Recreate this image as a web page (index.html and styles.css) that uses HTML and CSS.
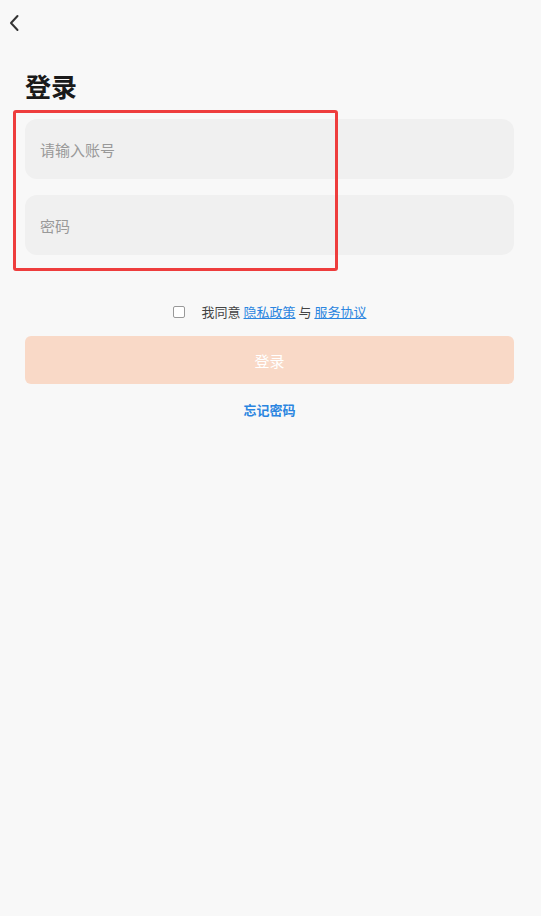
FILE: index.html
```html
<!DOCTYPE html>
<html lang="zh-CN">
<head>
    <meta charset="UTF-8">
    <meta name="viewport" content="width=device-width, initial-scale=1.0">
    <title>登录</title>
    <link rel="stylesheet" href="styles.css">
</head>
<body>
    <div class="topbar">
        <svg class="back" width="12" height="18" viewBox="0 0 12 18">
            <path d="M9.5 2 L3 9 L9.5 16" fill="none" stroke="#333" stroke-width="2" stroke-linecap="round" stroke-linejoin="round"/>
        </svg>
    </div>
    <div class="page">
        <h1 class="title">登录</h1>
        <div class="fields">
            <div class="field">请输入账号</div>
            <div class="field">密码</div>
            <!-- 标注框 -->
            <div class="mark"></div>
        </div>
        <div class="agree">
            <span class="check"></span>
            <span>我同意 <a href="#">隐私政策</a> 与 <a href="#">服务协议</a></span>
        </div>
        <button class="login">登录</button>
        <div class="forget">忘记密码</div>
    </div>
</body>
</html>
```

FILE: styles.css
```css
*{
    margin: 0;
    padding: 0;
    box-sizing: border-box;
}

html,body{
    height: 100%;
}

body{
    background-color: #f8f8f8;
    font-family: "Noto Sans CJK SC", "Noto Sans", sans-serif;
    color: #333;
}

.topbar{
    height: 46px;
    padding-left: 8px;
    padding-top: 14px;
}
.back{
    display: block;
}

.page{
    padding: 0 27px 0 25px;
}

.title{
    font-size: 26px;
    font-weight: bold;
    color: #1a1a1a;
    line-height: 36px;
    margin-top: 22px;
}

.fields{
    position: relative;
    margin-top: 15px;
    display: flex;
    flex-direction: column;
    gap: 16px;
}
.field{
    height: 60px;
    border-radius: 12px;
    background-color: #f0f0f0;
    padding-left: 15px;
    display: flex;
    align-items: center;
    font-size: 15px;
    color: #999;
}

.mark{
    position: absolute;
    left: -12px;
    top: -9px;
    width: 325px;
    height: 161px;
    border: 3px solid #ee3d3d;
    border-radius: 3px;
}

.agree{
    margin-top: 48px;
    display: flex;
    justify-content: center;
    align-items: center;
    font-size: 13px;
    color: #444;
    line-height: 18px;
}
.check{
    width: 12px;
    height: 12px;
    border: 1px solid #999;
    border-radius: 2px;
    background: #fff;
    margin-right: 17px;
}
.agree a{
    color: #2a85e0;
}

.login{
    display: block;
    width: 100%;
    height: 48px;
    margin-top: 15px;
    border: none;
    border-radius: 6px;
    background-color: #f9d9c7;
    color: #fff;
    font-size: 15px;
    font-family: inherit;
}

.forget{
    text-align: center;
    margin-top: 16px;
    font-size: 13px;
    font-weight: bold;
    color: #2a85e0;
}
```
